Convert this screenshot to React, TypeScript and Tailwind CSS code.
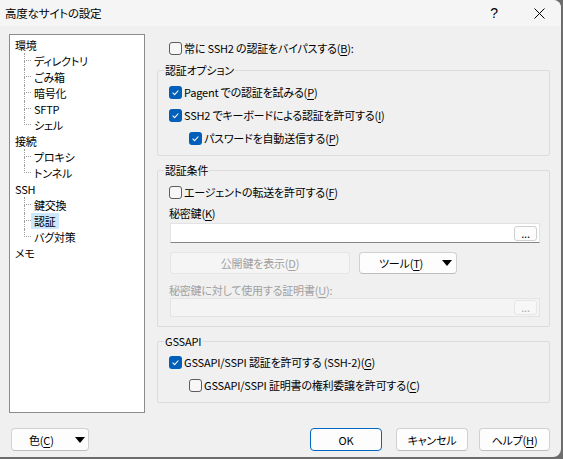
import React from "react"

function M({ c }: { c: string }) {
  return <span className="underline underline-offset-[2px]">{c}</span>
}

function Check({ checked }: { checked?: boolean }) {
  if (checked) {
    return (
      <span className="w-[13px] h-[13px] rounded-[3px] bg-[#005fb8] flex items-center justify-center shrink-0">
        <svg width="9" height="9" viewBox="0 0 9 9">
          <path d="M1.6 4.7 L3.6 6.6 L7.4 2.5" stroke="#ffffff" strokeWidth="1.1" fill="none" />
        </svg>
      </span>
    )
  }
  return <span className="w-[13px] h-[13px] rounded-[3px] border border-[#5c5c5c] bg-[#f7f7f7] shrink-0" />
}

function Row({ checked, children, className = "" }: { checked?: boolean; children: React.ReactNode; className?: string }) {
  return (
    <div className={`flex items-center h-[16px] gap-[2px] ${className}`}>
      <Check checked={checked} />
      <span className="whitespace-nowrap">{children}</span>
    </div>
  )
}

function Tri() {
  return (
    <svg width="10" height="6" viewBox="0 0 10 6" className="shrink-0">
      <path d="M0 0 H10 L5 6 Z" fill="#000000" />
    </svg>
  )
}

function Dots({ disabled }: { disabled?: boolean }) {
  return (
    <span
      className={`w-[23px] h-[15px] rounded-[3px] border flex items-center justify-center text-[11px] leading-[11px] ${
        disabled ? "border-[#e6e6e6] bg-[#f7f7f7] text-[#a8a8a8]" : "border-[#cfcfcf] bg-[#fdfdfd] text-black"
      }`}
    >
      ...
    </span>
  )
}

type Node = { label: string; children?: string[] }

const tree: Node[] = [
  { label: "環境", children: ["ディレクトリ", "ごみ箱", "暗号化", "SFTP", "シェル"] },
  { label: "接続", children: ["プロキシ", "トンネル"] },
  { label: "SSH", children: ["鍵交換", "認証", "バグ対策"] },
  { label: "メモ" },
]

function Tree() {
  return (
    <div className="w-[136px] h-[379px] border border-[#8c8c8c] bg-white pt-[2px]">
      {tree.map((n) => (
        <div key={n.label}>
          <div className="h-[16px] flex items-center pl-[5px]">{n.label}</div>
          {n.children?.map((c, i) => {
            const last = i === (n.children?.length ?? 0) - 1
            const sel = c === "認証"
            return (
              <div key={c} className="h-[16px] flex">
                <div className="w-[14px] shrink-0" />
                <div className="w-[7px] shrink-0 flex flex-col">
                  <div className="h-[8px] border-l border-b border-dotted border-[#a0a0a0]" />
                  <div className={`h-[8px] ${last ? "" : "border-l border-dotted border-[#a0a0a0]"}`} />
                </div>
                <span className={`px-[3px] h-[16px] flex items-center ${sel ? "bg-[#cce8ff]" : ""}`}>{c}</span>
              </div>
            )
          })}
        </div>
      ))}
    </div>
  )
}

function Group({ title, className = "", children }: { title: string; className?: string; children: React.ReactNode }) {
  return (
    <fieldset className={`border border-[#dcdcdc] rounded-[2px] pl-[11px] pr-[9px] pb-[9px] ${className}`}>
      <legend className="-ml-[5px] px-[1px] leading-[14px]">{title}</legend>
      {children}
    </fieldset>
  )
}

const btn = "h-[23px] rounded-[4px] border border-[#d0d0d0] border-b-[#bdbdbd] bg-[#fdfdfd] flex items-center"

export default function App() {
  return (
    <div className="w-[563px] h-[459px] bg-[#6d6d6d] font-['Noto_Sans_CJK_JP',sans-serif] text-[11px] leading-[16px] text-black [font-feature-settings:'palt'] tracking-[-0.2px]">
      <div className="w-[561px] h-[457px] bg-[#f0f0f0] rounded-tr-[8px] rounded-br-[8px] overflow-hidden flex flex-col">
        {/* title bar */}
        <div className="h-[26px] bg-[#f5f5f5] flex items-center pl-[5px] shrink-0">
          <span className="flex-1 text-[11.5px]">高度なサイトの設定</span>
          <span className="w-[10px] text-center text-[14px] font-['Liberation_Sans',sans-serif] mr-[35px]">?</span>
          <svg width="11" height="11" viewBox="0 0 11 11" className="mr-[16px]">
            <path d="M0.5 0.5 L10.5 10.5 M10.5 0.5 L0.5 10.5" stroke="#000000" strokeWidth="1" />
          </svg>
        </div>

        {/* body */}
        <div className="flex pl-[9px] pt-[8px]">
          <Tree />
          <div className="ml-[12px] w-[393px] flex flex-col">
            <Row className="mt-[6px] ml-[12px]">
              常に SSH2 の認証をバイパスする(<M c="B" />):
            </Row>

            <Group title="認証オプション" className="mt-[7px]">
              <Row checked className="mt-[7px]">
                Pagent での認証を試みる(<M c="P" />)
              </Row>
              <Row checked className="mt-[7px]">
                SSH2 でキーボードによる認証を許可する(<M c="I" />)
              </Row>
              <Row checked className="mt-[7px] ml-[20px]">
                パスワードを自動送信する(<M c="P" />)
              </Row>
            </Group>

            <Group title="認証条件" className="mt-[7px]">
              <Row className="mt-[7px]">
                エージェントの転送を許可する(<M c="F" />)
              </Row>
              <div className="mt-[5px] h-[16px] flex items-center">
                秘密鍵(<M c="K" />)
              </div>
              <div className="mt-[2px] ml-[1px] h-[20px] bg-white border border-[#e3e3e3] border-b-[#868686] flex items-center justify-end pr-[2px]">
                <Dots />
              </div>
              <div className="mt-[9px] ml-[1px] flex gap-[9px]">
                <div className="w-[180px] h-[22px] rounded-[4px] border border-[#e5e5e5] bg-[#f5f5f5] text-[#a0a0a0] flex items-center justify-center">
                  公開鍵を表示(<M c="D" />)
                </div>
                <div className="w-[98px] h-[22px] rounded-[4px] border border-[#d0d0d0] border-b-[#bdbdbd] bg-[#fdfdfd] flex items-center pl-[19px] pr-[4px]">
                  <span className="flex-1">
                    ツール(<M c="T" />)
                  </span>
                  <Tri />
                </div>
              </div>
              <div className="mt-[9px] h-[14px] leading-[14px] text-[#a0a0a0] flex items-center">
                秘密鍵に対して使用する証明書(<M c="U" />):
              </div>
              <div className="mt-[1px] ml-[1px] h-[19px] bg-[#f4f4f4] border border-[#e3e3e3] flex items-center justify-end pr-[2px]">
                <Dots disabled />
              </div>
            </Group>

            <Group title="GSSAPI" className="mt-[7px]">
              <Row checked className="mt-[6px]">
                GSSAPI/SSPI 認証を許可する (SSH-2)(<M c="G" />)
              </Row>
              <Row className="mt-[7px] ml-[20px]">
                GSSAPI/SSPI 証明書の権利委譲を許可する(<M c="C" />)
              </Row>
            </Group>
          </div>
        </div>

        {/* bottom buttons */}
        <div className="flex items-center mt-[15px] px-[11px] h-[23px]">
          <div className={`${btn} w-[78px] pl-[17px] pr-[3px]`}>
            <span className="flex-1">
              色(<M c="C" />)
            </span>
            <Tri />
          </div>
          <div className="flex-1" />
          <div className="w-[72px] h-[23px] rounded-[4px] border border-[#0067c0] bg-[#fdfdfd] flex items-center justify-center">OK</div>
          <div className={`${btn} ml-[14px] w-[72px] justify-center`}>キャンセル</div>
          <div className={`${btn} ml-[11px] w-[71px] justify-center`}>
            ヘルプ(<M c="H" />)
          </div>
        </div>
      </div>
    </div>
  )
}
